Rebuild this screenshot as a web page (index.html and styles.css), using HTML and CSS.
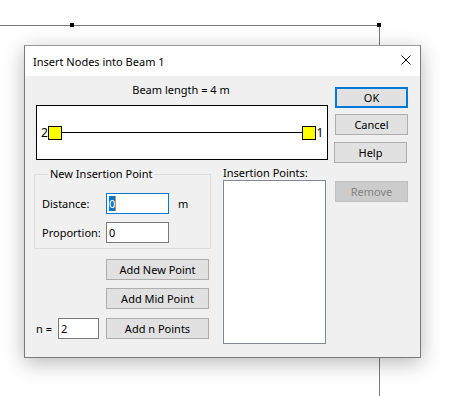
FILE: index.html
```html
<!DOCTYPE html>
<html>
<head>
<meta charset="utf-8">
<link rel="stylesheet" href="styles.css">
</head>
<body>
<div class="scene">
  <div class="bg-hline"></div>
  <div class="bg-vline"></div>
  <div class="dot dot-a"></div>
  <div class="dot dot-b"></div>

  <div class="dialog">
    <div class="titlebar">
      <span class="title">Insert Nodes into Beam 1</span>
      <svg class="close" width="10" height="10" viewBox="0 0 10 10"><path d="M0.5 0.5 L9.5 9.5 M9.5 0.5 L0.5 9.5" stroke="#000" stroke-width="1" fill="none"/></svg>
    </div>
    <div class="body">
      <div class="left">
        <div class="beamlen">Beam length = 4 m</div>
        <div class="canvas">
          <svg width="290" height="53" viewBox="0 0 290 53">
            <line x1="24" y1="26.5" x2="266" y2="26.5" stroke="#000" stroke-width="1"/>
            <rect x="11.5" y="20.5" width="13" height="13" fill="#ffff00" stroke="#000" stroke-width="1"/>
            <rect x="265.5" y="20.5" width="13" height="13" fill="#ffff00" stroke="#000" stroke-width="1"/>
            <text x="4" y="31" class="node-num">2</text>
            <text x="279.5" y="31" class="node-num">1</text>
          </svg>
        </div>
        <div class="lower">
          <div class="lower-left">
            <fieldset class="group">
              <legend>New Insertion Point</legend>
              <div class="row first">
                <span class="lbl">Distance:</span>
                <div class="field focus"><span class="sel">0</span><span class="caret"></span></div>
                <span class="unit">m</span>
              </div>
              <div class="row second">
                <span class="lbl">Proportion:</span>
                <div class="field">0</div>
              </div>
            </fieldset>
            <div class="actions">
              <div class="btn wide">Add New Point</div>
              <div class="btn wide mid">Add Mid Point</div>
              <div class="nrow">
                <span class="nlbl">n =</span>
                <div class="field small">2</div>
                <div class="btn wide">Add n Points</div>
              </div>
            </div>
          </div>
          <div class="lower-right">
            <div class="listlabel">Insertion Points:</div>
            <div class="list"></div>
          </div>
        </div>
      </div>
      <div class="right">
        <div class="btn side ok">OK</div>
        <div class="btn side cancel">Cancel</div>
        <div class="btn side help">Help</div>
        <div class="btn side remove">Remove</div>
      </div>
    </div>
  </div>
</div>
</body>
</html>
```
FILE: styles.css
```css
html, body {
  margin: 0;
  padding: 0;
  background: #ffffff;
}
body {
  font-family: "Noto Sans", "Liberation Sans", sans-serif;
  font-size: 11px;
  color: #000;
}
.scene {
  position: relative;
  width: 466px;
  height: 396px;
  overflow: hidden;
}
.bg-hline {
  position: absolute;
  left: 0;
  top: 25px;
  width: 380px;
  height: 1px;
  background: #7a7a7a;
}
.bg-vline {
  position: absolute;
  left: 379px;
  top: 25px;
  width: 1px;
  height: 371px;
  background: #7a7a7a;
}
.dot {
  position: absolute;
  width: 4px;
  height: 4px;
  background: #000;
  top: 23px;
}
.dot-a { left: 70px; }
.dot-b { left: 377px; }

.dialog {
  position: absolute;
  left: 24px;
  top: 45px;
  width: 397px;
  height: 313px;
  box-sizing: border-box;
  border: 1px solid #7a7a7a;
  border-top-color: #9a9a9a;
  background: #f0f0f0;
  box-shadow: 0 5px 20px rgba(0, 0, 0, 0.28);
  display: flex;
  flex-direction: column;
}
.titlebar {
  height: 30px;
  background: #ffffff;
  display: flex;
  align-items: center;
  padding: 0 9px 0 8px;
}
.title {
  flex: 1;
  font-size: 11px;
  line-height: 16px;
  margin-top: 1px;
}
.close {
  display: block;
  margin-top: -2px;
}
.body {
  display: flex;
  padding: 6px 12px 0 9px;
  gap: 7px;
}
.left {
  width: 294px;
  display: flex;
  flex-direction: column;
}
.beamlen {
  line-height: 16px;
  height: 16px;
  text-align: center;
}
.canvas {
  margin-top: 7px;
  margin-left: 2px;
  width: 292px;
  height: 55px;
  box-sizing: border-box;
  border: 1px solid #000;
  background: #fff;
}
.canvas svg { display: block; }
.node-num {
  font-family: "Noto Sans", "Liberation Sans", sans-serif;
  font-size: 12px;
  fill: #000;
}
.lower {
  display: flex;
  margin-top: 5px;
  gap: 12px;
}
.lower-left {
  width: 177px;
  display: flex;
  flex-direction: column;
}
.group {
  margin: 1px 0 0 0;
  padding: 0 0 5px 7px;
  border: 1px solid #dcdcdc;
  width: 177px;
  box-sizing: border-box;
  min-inline-size: 0;
}
.group legend {
  padding: 0 2px;
  margin-left: 6px;
  line-height: 16px;
}
.row {
  display: flex;
  align-items: center;
}
.row.first { margin-top: 11px; }
.row.second { margin-top: 8px; }
.lbl { width: 64px; }
.field {
  width: 63px;
  height: 21px;
  box-sizing: border-box;
  border: 1px solid #7a7a7a;
  background: #fff;
  padding: 0 0 0 2px;
  line-height: 18px;
  display: flex;
  align-items: center;
}
.field.focus { border-color: #0078d7; }
.sel {
  background: #0078d7;
  color: #fff;
  line-height: 15px;
}
.caret {
  width: 1px;
  height: 15px;
  background: #e08a30;
}
.unit { margin-left: 9px; }
.actions {
  margin-top: 10px;
  display: flex;
  flex-direction: column;
}
.btn {
  height: 21px;
  box-sizing: border-box;
  border: 1px solid #adadad;
  background: #e1e1e1;
  display: flex;
  align-items: center;
  justify-content: center;
  line-height: 16px;
}
.wide {
  width: 103px;
}
.actions > .wide { margin-left: 72px; }
.actions > .mid { margin-top: 8px; }
.nrow {
  display: flex;
  align-items: center;
  margin-top: 9px;
}
.nlbl {
  margin-left: 2px;
  width: 22px;
}
.field.small { width: 41px; }
.nrow .btn { margin-left: 7px; }
.lower-right {
  width: 103px;
  display: flex;
  flex-direction: column;
}
.listlabel {
  line-height: 15px;
  height: 15px;
}
.list {
  height: 164px;
  box-sizing: border-box;
  border: 1px solid #828790;
  background: #fff;
}
.right {
  width: 73px;
  display: flex;
  flex-direction: column;
  padding-top: 5px;
}
.side { width: 73px; }
.ok { border: 2px solid #0078d7; }
.cancel { margin-top: 6px; }
.help { margin-top: 7px; margin-left: -1px; }
.remove {
  margin-top: 18px;
  background: #cccccc;
  border-color: #bfbfbf;
  color: #838383;
}
```
